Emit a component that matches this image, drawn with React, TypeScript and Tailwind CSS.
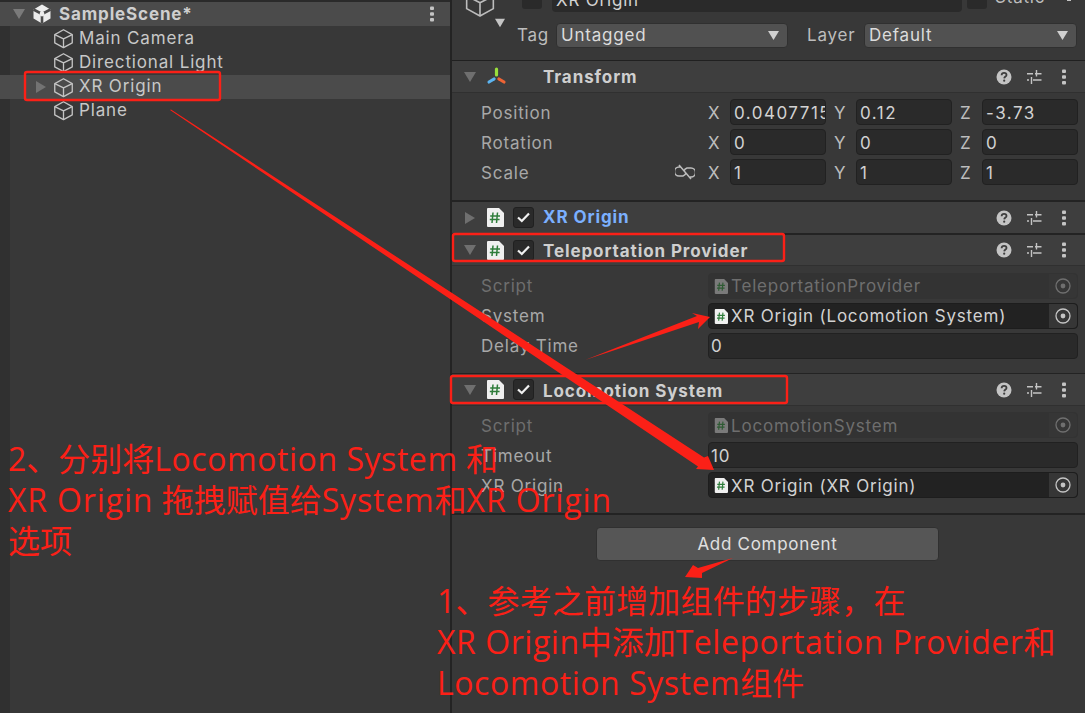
import React from "react";

const Cube = ({ size = 21, color = "#c4c4c4", sw = 1.5 }: { size?: number; color?: string; sw?: number }) => (
  <svg width={size} height={size} viewBox="0 0 24 24" fill="none" stroke={color} strokeWidth={sw} strokeLinejoin="round" className="shrink-0">
    <path d="M12 2 L22 7.5 V17 L12 22.5 L2 17 V7.5 Z" />
    <path d="M2 7.5 L12 12.5 L22 7.5 M12 12.5 V22.5" />
  </svg>
);

const Help = () => (
  <svg width="16" height="16" viewBox="0 0 16 16" className="shrink-0">
    <circle cx="8" cy="8" r="7.5" fill="#c4c4c4" />
    <path d="M5.6 6.2 C5.7 4.6 6.8 3.9 8.1 3.9 C9.5 3.9 10.5 4.8 10.5 5.9 C10.5 7.5 8.3 7.6 8.2 9.4" fill="none" stroke="#3e3e3e" strokeWidth="1.8" />
    <circle cx="8.2" cy="11.7" r="1.1" fill="#3e3e3e" />
  </svg>
);

const Sliders = () => (
  <svg width="16" height="16" viewBox="0 0 16 16" className="shrink-0" fill="none" stroke="#c4c4c4" strokeWidth="1.4">
    <path d="M1 4.8 H7 M9 4.8 H15.5 M10.5 1 V7.5 M1 11 H3 M7 11 H15.5 M5.5 8 V15" />
  </svg>
);

const Kebab = () => (
  <svg width="6" height="16" viewBox="0 0 6 16" className="shrink-0" fill="#c4c4c4">
    <rect x="1" y="0.5" width="4" height="3.4" rx="1" />
    <rect x="1" y="6.3" width="4" height="3.4" rx="1" />
    <rect x="1" y="12.1" width="4" height="3.4" rx="1" />
  </svg>
);

const HeaderTools = () => (
  <div className="ml-auto flex items-center pr-[18px]">
    <Help />
    <div className="ml-[14px]"><Sliders /></div>
    <div className="ml-[19px]"><Kebab /></div>
  </div>
);

const Doc = ({ w = 18, h = 19, dim = false }: { w?: number; h?: number; dim?: boolean }) => (
  <svg width={w} height={h} viewBox="0 0 18 19" className="shrink-0">
    <path d="M1 1 Q1 0 2 0 H13 L18 5 V18 Q18 19 17 19 H2 Q1 19 1 18 Z" fill={dim ? "#7a7a7a" : "#f0f0f0"} />
    <path d="M7 4.5 L6 15 M11.5 4.5 L10.5 15 M4.2 8 H14 M3.8 11.6 H13.6" stroke={dim ? "#2e5a33" : "#2f7d3b"} strokeWidth="1.5" fill="none" />
  </svg>
);

const Check = () => (
  <div className="flex h-[21px] w-[21px] shrink-0 items-center justify-center rounded-[3px] border border-[#202020] bg-[#2a2a2a]">
    <svg width="13" height="11" viewBox="0 0 13 11" fill="none" stroke="#f0f0f0" strokeWidth="2.2">
      <path d="M1 5.5 L4.8 9 L12 1.5" />
    </svg>
  </div>
);

const Tri = ({ down = true, color = "#6f6f6f", w = 12 }: { down?: boolean; color?: string; w?: number }) =>
  down ? (
    <svg width={w} height={w} viewBox="0 0 12 12" className="shrink-0"><path d="M0 1 H12 L6 11 Z" fill={color} /></svg>
  ) : (
    <svg width={w} height={w} viewBox="0 0 12 12" className="shrink-0"><path d="M1 0 L11 6 L1 12 Z" fill={color} /></svg>
  );

const Target = ({ dim = false }: { dim?: boolean }) => (
  <div className="ml-auto flex h-full w-[28px] shrink-0 items-center justify-center rounded-r-[4px] bg-[#363636]">
    <svg width="16" height="16" viewBox="0 0 16 16" fill="none">
      <circle cx="8" cy="8" r="7" stroke={dim ? "#6f6f6f" : "#c4c4c4"} strokeWidth="1.3" />
      <circle cx="8" cy="8" r="2.4" fill={dim ? "#6f6f6f" : "#c4c4c4"} />
    </svg>
  </div>
);

const Header = ({
  title,
  open = true,
  blue = false,
  h = "h-[31px]",
  pt = "",
  icon,
}: {
  title: string;
  open?: boolean;
  blue?: boolean;
  h?: string;
  pt?: string;
  icon?: React.ReactNode;
}) => (
  <div className={`flex ${h} items-center bg-[#3e3e3e] pl-[12px]`}>
    <Tri down={open} />
    <div className="ml-[10px] flex items-center">
      {icon ?? <Doc />}
      {!icon && <div className="ml-[9px]"><Check /></div>}
    </div>
    <span className={`ml-[9px] text-[17px] font-bold tracking-[0.9px] ${pt} ${blue ? "text-[#7bb0ff]" : "text-[#cfcfcf]"}`}>{title}</span>
    <HeaderTools />
  </div>
);

const Vec = ({ axis, v }: { axis: string; v: string }) => (
  <div className="flex items-center">
    <span className="w-[22px] pt-[4px] text-[17px] text-[#bdbdbd]">{axis}</span>
    <div className="flex h-[26px] w-[96px] items-center overflow-hidden rounded-[4px] border border-[#212121] bg-[#2a2a2a] pl-[3px] pt-[4px] text-[17px] tracking-[1.5px] whitespace-nowrap text-[#d2d2d2]">{v}</div>
  </div>
);

const VecRow = ({ label, x, y, z, link = false }: { label: string; x: string; y: string; z: string; link?: boolean }) => (
  <div className="flex h-[26px] items-center pl-[29px] pr-[7px]">
    <span className="pt-[4px] text-[17px] tracking-[0.8px] text-[#a8a8a8]">{label}</span>
    <div className="ml-auto flex items-center">
      {link && (
        <svg width="20" height="16" viewBox="0 0 20 16" fill="none" stroke="#bdbdbd" strokeWidth="1.5" className="mr-[13px]">
          <path d="M5 3 H4 A4.5 4.5 0 0 0 4 12 H8 A4.5 4.5 0 0 0 11 9 M15 13 H16 A4.5 4.5 0 0 0 16 4 H12 A4.5 4.5 0 0 0 9 7 M4 1 L16 15" />
        </svg>
      )}
      <div className="flex gap-[8px]">
        <Vec axis="X" v={x} />
        <Vec axis="Y" v={y} />
        <Vec axis="Z" v={z} />
      </div>
    </div>
  </div>
);

const FieldRow = ({
  label,
  value,
  dim = false,
  object = false,
  dark = false,
  tp = "pt-[2px]",
}: {
  label: string;
  value: string;
  dim?: boolean;
  object?: boolean;
  dark?: boolean;
  tp?: string;
}) => (
  <div className="flex h-[26px] items-center pl-[29px] pr-[7px]">
    <span className={`w-[227px] shrink-0 ${tp} text-[17px] tracking-[0.8px] ${dim ? "text-[#6e6e6e]" : "text-[#a8a8a8]"}`}>{label}</span>
    <div className={`flex h-[26px] flex-1 items-center overflow-hidden rounded-[4px] border ${dim ? "border-[#333333] bg-[#333333] text-[#6e6e6e]" : dark ? "border-[#1d1d1d] bg-[#222222] text-[#d2d2d2]" : "border-[#212121] bg-[#2a2a2a] text-[#d2d2d2]"} text-[17px]`}>
      {object ? <div className="ml-[5px] mr-[3px]"><Doc w={14} h={17} dim={dim} /></div> : <div className="w-[2px]" />}
      <span className={`whitespace-nowrap ${tp} tracking-[0.8px]`}>{value}</span>
      {object && <Target dim={dim} />}
    </div>
  </div>
);

const Dropdown = ({ value, className }: { value: string; className: string }) => (
  <div className={`flex h-[25px] items-center rounded-[4px] border border-[#303030] bg-[#515151] pl-[4px] pr-[8px] text-[17px] tracking-[0.8px] text-[#dcdcdc] ${className}`}>
    <span>{value}</span>
    <div className="ml-auto"><Tri color="#d0d0d0" w={11} /></div>
  </div>
);

const Unity = () => (
  <svg width="20" height="20" viewBox="0 0 20 20" className="shrink-0">
    <path d="M10 0.5 L18.5 5.5 V14.5 L10 19.5 L1.5 14.5 V5.5 Z" fill="#ececec" />
    <path d="M10 10 V19.5 M10 10 L1.5 5.5 M10 10 L18.5 5.5" stroke="#4b4b4b" strokeWidth="2.6" />
    <circle cx="10" cy="10" r="2.4" fill="#ececec" />
  </svg>
);

const Tree = ({ label, selected = false }: { label: string; selected?: boolean }) => (
  <div className={`flex h-[24px] items-center pl-[35px] ${selected ? "bg-[#4b4b4b]" : ""}`}>
    <div className="flex w-[18px] items-center">{selected && <Tri down={false} color="#737373" />}</div>
    <Cube />
    <span className={`ml-[5px] text-[17px] tracking-[0.85px] text-[#c8c8c8] ${selected ? "" : "pt-[1px]"}`}>{label}</span>
  </div>
);

const L = ({ children }: { children: React.ReactNode }) => <span className="tracking-[0.55px]">{children}</span>;
const M = ({ children }: { children: React.ReactNode }) => <span className="tracking-[0.85px]">{children}</span>;

export default function App() {
  return (
    <div className="relative flex h-[713px] w-[1085px] overflow-hidden bg-[#383838] font-['Inter','Noto_Sans_CJK_SC',sans-serif]">
      {/* Hierarchy */}
      <div className="flex h-full w-[450px] shrink-0 flex-col">
        <div className="h-[2px] bg-[#2a2a2a]" />
        <div className="flex h-[24px] items-center bg-[#4b4b4b] pl-[13px]">
          <Tri color="#7a7a7a" />
          <div className="ml-[7px]"><Unity /></div>
          <span className="ml-[7px] pt-[2px] text-[17px] font-bold tracking-[0.85px] text-[#cfcfcf]">SampleScene*</span>
          <div className="ml-auto pr-[15px]"><Kebab /></div>
        </div>
        <div className="flex flex-1 flex-col">
          <div className="flex flex-col border-l-[10px] border-[#303030]">
            <div className="-ml-[10px]"><Tree label="Main Camera" /></div>
            <div className="-ml-[10px]"><Tree label="Directional Light" /></div>
            <div className="-ml-[10px] mt-[1px]"><Tree label="XR Origin" selected /></div>
            <div className="-ml-[10px] -mt-[1px]"><Tree label="Plane" /></div>
          </div>
          <div className="w-[10px] flex-1 bg-[#303030]" />
        </div>
      </div>

      {/* Inspector */}
      <div className="flex h-full flex-1 flex-col border-l-2 border-[#232323]">
        <div className="relative flex h-[60px] flex-col">
          <div className="flex h-[12px] items-end">
            <div className="-mb-[6px] ml-[12px]"><Cube size={32} color="#bdbdbd" sw={1.2} /></div>
            <div className="mb-[3px] ml-[26px] h-[10px] w-[20px] rounded-b-[3px] bg-[#2a2a2a]" />
            <div className="ml-[10px] flex h-[12px] w-[410px] items-end overflow-hidden rounded-b-[4px] bg-[#2a2a2a] pb-[3px] pl-[4px] text-[17px] leading-[17px] tracking-[0.8px] text-[#d2d2d2]">XR Origin</div>
            <div className="mb-[3px] ml-[5px] h-[9px] w-[20px] rounded-b-[3px] bg-[#2a2a2a]" />
            <div className="ml-[8px] flex h-[12px] items-end overflow-hidden pb-[6px] text-[17px] leading-[17px] tracking-[0.8px] text-[#bdbdbd]">Static</div>
            <div className="mb-[11px] ml-auto mr-[14px] h-[1px] w-[4px] bg-[#c4c4c4]" />
          </div>
          <div className="absolute left-[43px] top-[18px]"><Tri color="#c4c4c4" w={10} /></div>
          <div className="mt-[11px] flex items-center">
            <span className="ml-[65px] w-[39px] text-[17px] tracking-[0.8px] text-[#bdbdbd]">Tag</span>
            <div className="-mt-[1px]"><Dropdown value="Untagged" className="w-[232px]" /></div>
            <span className="ml-[19px] w-[57px] text-[17px] tracking-[0.8px] text-[#bdbdbd]">Layer</span>
            <div className="-mt-[1px]"><Dropdown value="Default" className="w-[213px]" /></div>
          </div>
        </div>
        <div className="h-[1px] bg-[#202020]" />
        <Header title="Transform" pt="pt-[2px]" icon={
          <svg width="21" height="20" viewBox="0 0 21 20" fill="none" strokeWidth="3.2" strokeLinecap="round" className="mr-[27px]">
            <path d="M10.5 2 V8" stroke="#9adf3c" />
            <path d="M8 12 L3 15" stroke="#5cb4f0" />
            <path d="M13 12 L18 15" stroke="#ee6435" />
          </svg>
        } />
        <div className="h-[1px] bg-[#303030]" />
        <div className="flex h-[107px] flex-col gap-[4px] pt-[6px]">
          <VecRow label="Position" x="0.04077151" y="0.12" z="-3.73" />
          <VecRow label="Rotation" x="0" y="0" z="0" />
          <VecRow label="Scale" x="1" y="1" z="1" link />
        </div>
        <div className="h-[2px] bg-[#232323]" />
        <Header title="XR Origin" open={false} blue />
        <div className="h-[2px] bg-[#232323]" />
        <Header title="Teleportation Provider" h="h-[30px]" pt="pt-[4px]" />
        <div className="h-[1px] bg-[#303030]" />
        <div className="flex h-[107px] flex-col gap-[4px] pt-[7px]">
          <FieldRow label="Script" value="TeleportationProvider" dim object />
          <FieldRow label="System" value="XR Origin (Locomotion System)" object dark />
          <FieldRow label="Delay Time" value="0" />
        </div>
        <div className="h-[1px] bg-[#232323]" />
        <Header title="Locomotion System" pt="pt-[4px]" />
        <div className="h-[1px] bg-[#303030]" />
        <div className="flex h-[107px] flex-col gap-[4px] pt-[6px]">
          <FieldRow label="Script" value="LocomotionSystem" dim object tp="pt-[4px]" />
          <FieldRow label="Timeout" value="10" tp="pt-[4px]" />
          <FieldRow label="XR Origin" value="XR Origin (XR Origin)" object dark tp="pt-[4px]" />
        </div>
        <div className="h-[2px] bg-[#232323]" />
        <div className="mt-[12px] flex justify-center pr-[2px]">
          <button className="h-[34px] w-[343px] rounded-[4px] border border-[#303030] bg-[#565656] pt-[1px] text-[17px] tracking-[0.7px] text-[#e0e0e0]">Add Component</button>
        </div>
      </div>

      {/* Red annotations drawn over the screenshot */}
      <svg width="1085" height="713" viewBox="0 0 1085 713" className="pointer-events-none absolute left-0 top-0" fill="none">
        <rect x="25" y="72" width="195" height="28" rx="2" stroke="#fb2017" strokeWidth="2.4" />
        <rect x="453" y="234" width="331" height="27" rx="2" stroke="#fb2017" strokeWidth="2.4" />
        <rect x="451" y="376" width="336" height="27" rx="2" stroke="#fb2017" strokeWidth="2.4" />
        <path d="M170 110 L171 109.6 L704 457.5 L708 456 L714 470 L696 469 L698 466.5 Z" fill="#fb2017" />
        <path d="M585 360 L697 316 L692 313 L710 317 L698 329 L699 322 Z" fill="#fb2017" />
        <path d="M733 558 L698 568 L693 565 L685 577 L702 578 L702 573 Z" fill="#fb2017" />
      </svg>
      <div className="pointer-events-none absolute left-[8px] top-[438px] w-[640px] font-['Open_Sans','Noto_Sans_CJK_SC',sans-serif] text-[32px] leading-[41px] text-[#fb2017]">
        <div>2、分别将<L>Locomotion System</L> 和</div>
        <div><M>XR Origin</M> 拖拽赋值给<M>System</M>和<M>XR Origin</M></div>
        <div>选项</div>
      </div>
      <div className="pointer-events-none absolute left-[437px] top-[580px] w-[640px] font-['Open_Sans','Noto_Sans_CJK_SC',sans-serif] text-[32px] leading-[41px] text-[#fb2017]">
        <div className="tracking-[0.15px]">1、参考之前增加组件的步骤，在</div>
        <div><L>XR Origin</L>中添加<L>Teleportation Provider</L>和</div>
        <div><L>Locomotion System</L>组件</div>
      </div>
    </div>
  );
}
